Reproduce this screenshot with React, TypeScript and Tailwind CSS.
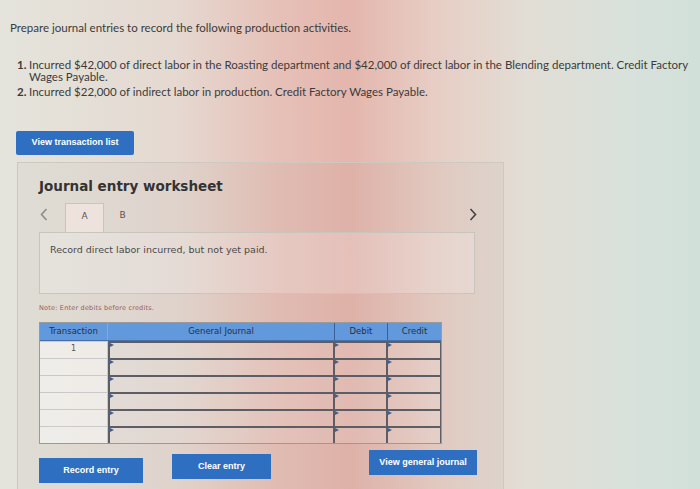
import React from 'react';

const rows = [0, 1, 2, 3, 4, 5];

const Arrow = () => (
  <span className="absolute left-0 top-0 h-0 w-0 border-y-[2px] border-l-[4px] border-y-transparent border-l-[#3c5f95]" />
);

const Chevron = ({ dir, color }: { dir: 'left' | 'right'; color: string }) => (
  <svg width="8" height="13" viewBox="0 0 8 13" fill="none" stroke={color} strokeWidth="1.6">
    {dir === 'left' ? <polyline points="6.5,1 1.5,6.5 6.5,12" /> : <polyline points="1.5,1 6.5,6.5 1.5,12" />}
  </svg>
);

const App: React.FC = () => {
  return (
    <div className="w-[700px] h-[489px] overflow-hidden bg-[linear-gradient(90deg,#e4e4dc_0%,#e5d9d1_25%,#e6c0b7_40%,#e4b6ad_50%,#e7cdc4_62%,#e2ddd5_75%,#d9e1da_88%,#d2e0da_100%)] text-[#3b3b3b] font-['Lato',sans-serif]">
      <p className="pl-[10px] pt-[21px] text-[11.5px] leading-[13px]">
        Prepare journal entries to record the following production activities.
      </p>

      <ol className="mt-[25px] pl-[17px] pr-[4px] text-[11.5px] leading-[12px]">
        <li className="flex">
          <span className="w-[12px] shrink-0 font-bold">1.</span>
          <span>
            Incurred $42,000 of direct labor in the Roasting department and $42,000 of direct labor in the Blending
            department. Credit Factory Wages Payable.
          </span>
        </li>
        <li className="flex mt-[3px]">
          <span className="w-[12px] shrink-0 font-bold">2.</span>
          <span>Incurred $22,000 of indirect labor in production. Credit Factory Wages Payable.</span>
        </li>
      </ol>

      <button className="ml-[16px] mt-[33px] flex h-[24px] w-[118px] items-center justify-center rounded-[2px] bg-[#2f6fc1] text-[9px] font-bold text-white font-['Liberation_Sans',sans-serif]">
        View transaction list
      </button>

      <section className="ml-[17px] mt-[7px] h-[330px] w-[487px] border border-[#cdc9c1] bg-black/[0.025] pl-[21px] pr-[26px] pt-[14px] font-['DejaVu_Sans',sans-serif]">
        <h2 className="text-[13.5px] font-bold leading-[18px] text-[#333]">Journal entry worksheet</h2>

        <div className="mt-[8px] flex h-[29px] items-start">
          <span className="mt-[5px] w-[26px] pl-[1px]">
            <Chevron dir="left" color="#8c8c8c" />
          </span>
          <div className="relative z-10 -mb-px flex h-[29px] w-[39px] justify-center border border-b-0 border-[#c9c5be] bg-[#ede3dc] pt-[6px] text-[9px] text-[#555]">
            A
          </div>
          <div className="flex h-[29px] w-[37px] justify-center pt-[6px] text-[9px] text-[#555]">B</div>
          <span className="mt-[5px] ml-auto">
            <Chevron dir="right" color="#444" />
          </span>
        </div>
        <div className="h-[62px] w-[436px] border border-[#c9c5be] bg-white/20 pl-[10px] pt-[10px] text-[9.5px] text-[#4a4a4a]">
          Record direct labor incurred, but not yet paid.
        </div>

        <p className="mt-[10px] text-[6.5px] tracking-[0.2px] text-[#9a5a55]">Note: Enter debits before credits.</p>

        <div className="mt-[8px] w-[403px] border border-[#9a9a9a]">
          <div className="flex h-[18px] border-b border-[#4a6fa5] bg-[#6199dc] text-[8.5px] text-[#263042]">
            <div className="flex w-[68px] items-center justify-center border-r border-[#8fa7c7]">Transaction</div>
            <div className="flex w-[227px] items-center justify-center border-r border-[#3c5f95]">General Journal</div>
            <div className="flex w-[53px] items-center justify-center border-r border-[#3c5f95]">Debit</div>
            <div className="flex flex-1 items-center justify-center">Credit</div>
          </div>
          {rows.map((r) => (
            <div key={r} className="flex h-[17px]">
              <div className="flex w-[68px] items-start justify-center border-t border-r border-[#c9c9c9] bg-white/50 pt-[1px] text-[8px] text-[#555]">
                {r === 0 ? '1' : ''}
              </div>
              <div className="relative w-[227px] border-t-2 border-x-2 border-[#5d5d66] bg-white/10">
                <Arrow />
              </div>
              <div className="relative w-[53px] border-t-2 border-r-2 border-[#5d5d66] bg-white/10">
                <Arrow />
              </div>
              <div className="relative flex-1 border-t-2 border-r border-[#5d5d66] bg-white/10">
                <Arrow />
              </div>
            </div>
          ))}
        </div>

        <div className="mt-[6px] flex items-start font-['Liberation_Sans',sans-serif] text-[9px] font-bold text-white">
          <button className="mt-[8px] flex h-[25px] w-[107px] items-center justify-center bg-[#2f6fc1]">Record entry</button>
          <button className="ml-[29px] mt-[4px] flex h-[25px] w-[102px] items-center justify-center bg-[#2f6fc1]">Clear entry</button>
          <button className="ml-[98px] flex h-[25px] w-[111px] items-center justify-center bg-[#2f6fc1]">View general journal</button>
        </div>
      </section>
    </div>
  );
};

export default App;
